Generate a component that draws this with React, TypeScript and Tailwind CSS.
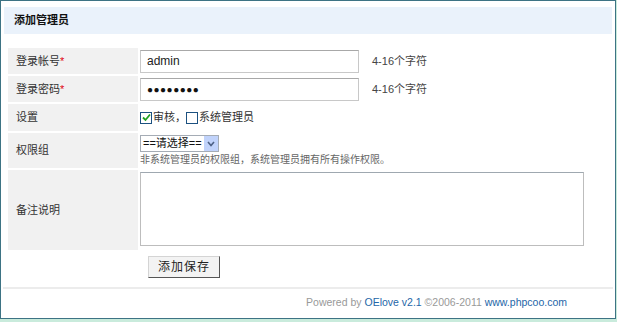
// Add admin form page
import React from 'react';

const font = { fontFamily: '"Liberation Sans", "Noto Sans CJK SC", sans-serif' };

const Check = ({ checked }: { checked?: boolean }) => (
  <span className="inline-flex w-[12px] h-[12px] border border-[#1c5180] bg-white items-center justify-center mr-[1px]">
    {checked && (
      <svg width="9" height="9" viewBox="0 0 9 9">
        <path d="M1 4.5 L3.5 7 L8 1.5" fill="none" stroke="#21a121" strokeWidth="1.8" />
      </svg>
    )}
  </span>
);

const Label = ({ text, required, className = '' }: { text: string; required?: boolean; className?: string }) => (
  <div className={`bg-[#f1f1f1] pl-[8px] flex items-center text-[#333] ${className}`}>
    {text}
    {required && <span className="text-[#e0000f]">*</span>}
  </div>
);

export default function App() {
  return (
    <div className="w-[617px] h-[322px] bg-[#c9ebdc] text-[11px]" style={font}>
      <div className="h-[319px] w-[616px] border border-[#3d7384] bg-white flex flex-col">
        {/* Header */}
        <div className="mt-[6px] mx-[3px] h-[27px] bg-[#eaf2fb] pl-[10px] flex items-center font-bold text-[#111]">
          添加管理员
        </div>

        {/* Form */}
        <div className="mt-[14px] ml-[7px] grid grid-cols-[130px_1fr] gap-x-[2px] gap-y-[2px]">
          <Label text="登录帐号" required className="h-[26px]" />
          <div className="flex items-center">
            <div className="w-[219px] h-[23px] border border-[#c8c8c8] border-t-[#a8a8a8] flex items-center pl-[6px] text-[#222] text-[12px]">
              admin
            </div>
            <span className="ml-[13px] text-[#444]">4-16个字符</span>
          </div>

          <Label text="登录密码" required className="h-[26px]" />
          <div className="flex items-center">
            <div className="w-[219px] h-[23px] border border-[#c8c8c8] border-t-[#a8a8a8] flex items-center pl-[6px] text-[#111] tracking-[0.5px] text-[10px]">
              ●●●●●●●●
            </div>
            <span className="ml-[13px] text-[#444]">4-16个字符</span>
          </div>

          <Label text="设置" className="h-[27px]" />
          <div className="flex items-center text-[#333]">
            <Check checked />
            <span>审核，</span>
            <Check />
            <span>系统管理员</span>
          </div>

          <Label text="权限组" className="h-[35px]" />
          <div className="flex flex-col pt-[2px]">
            <div className="w-[79px] h-[17px] border border-[#a5acb5] flex items-center justify-between text-[#111] text-[11px] whitespace-nowrap">
              <span className="pl-[2px] leading-none">==请选择==</span>
              <span className="w-[14px] h-[15px] bg-[#c1d3fb] flex items-center justify-center">
                <svg width="8" height="6" viewBox="0 0 8 6">
                  <path d="M1 1 L4 4.5 L7 1" fill="none" stroke="#4d6185" strokeWidth="1.6" />
                </svg>
              </span>
            </div>
            <span className="mt-[3px] text-[#666] text-[10px] leading-none">非系统管理员的权限组，系统管理员拥有所有操作权限。</span>
          </div>

          <Label text="备注说明" className="h-[80px]" />
          <div className="pt-[2px]">
            <div className="w-[444px] h-[74px] border border-[#bdbdbd] border-t-[#9fa8b0]" />
          </div>
        </div>

        {/* Submit */}
        <div className="ml-[147px] mt-[6px]">
          <button className="w-[72px] h-[22px] bg-[#f3f3f3] border border-[#d4d4d4] border-r-[#555] border-b-[#555] text-[#222] text-[12px] tracking-[1px]">
            添加保存
          </button>
        </div>

        {/* Footer */}
        <div className="mt-auto mx-[2px] mb-[2px] h-[29px] border-t-2 border-[#ececec] flex items-center justify-end pr-[46px] text-[10.5px] text-[#999] whitespace-pre">
          Powered by <span className="text-[#2466a8]">OElove v2.1</span> ©2006-2011{' '}
          <span className="text-[#2466a8]">www.phpcoo.com</span>
        </div>
      </div>
    </div>
  );
}
